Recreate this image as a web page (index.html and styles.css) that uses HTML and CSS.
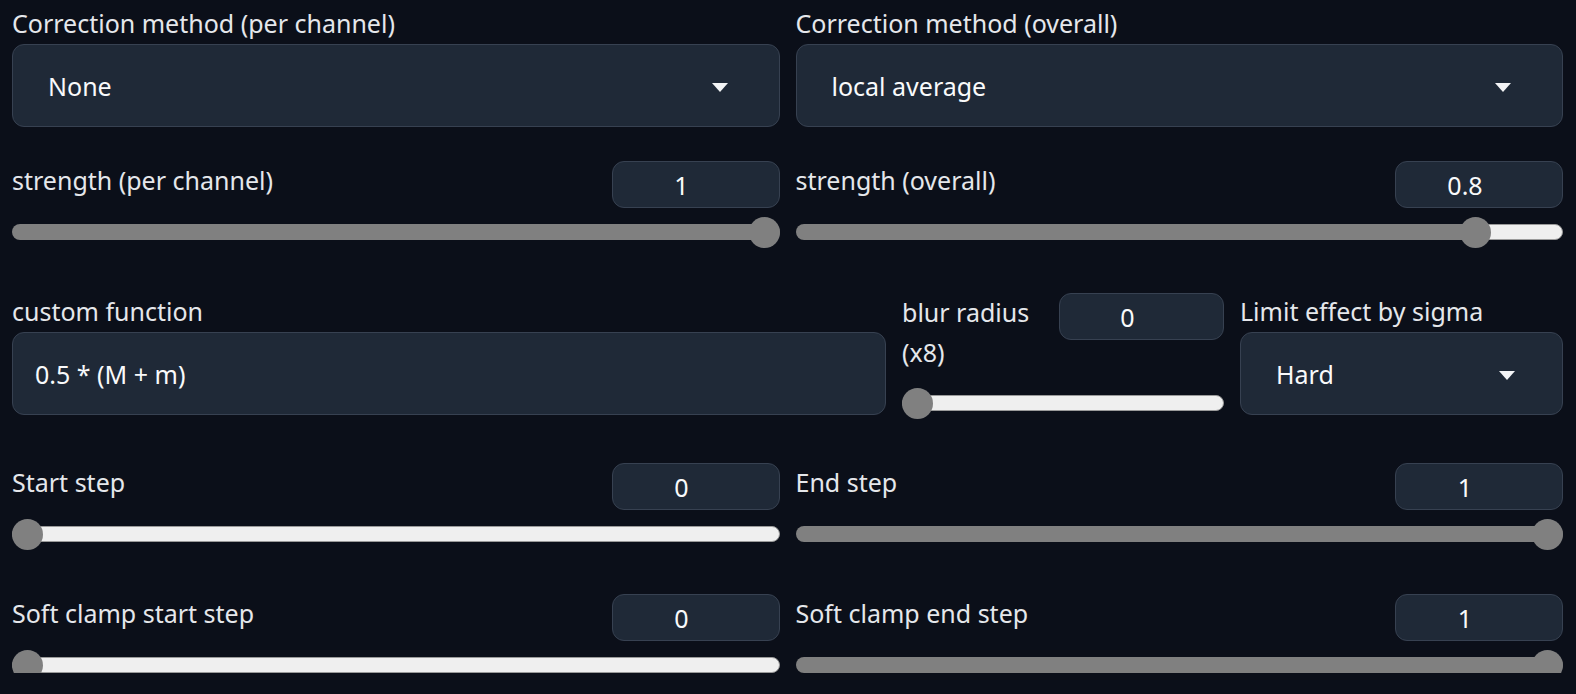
FILE: index.html
```html
<!DOCTYPE html>
<html>
<head>
<meta charset="utf-8">
<link rel="stylesheet" href="styles.css">
</head>
<body>
<div class="page">
  <div class="row two">
    <div class="field">
      <div class="field-label">Correction method (per channel)</div>
      <div class="box select"><span>None</span><svg class="caret" width="16" height="9" viewBox="0 0 16 9"><path d="M0 0H16L8 9Z"/></svg></div>
    </div>
    <div class="field">
      <div class="field-label">Correction method (overall)</div>
      <div class="box select"><span>local average</span><svg class="caret" width="16" height="9" viewBox="0 0 16 9"><path d="M0 0H16L8 9Z"/></svg></div>
    </div>
  </div>

  <div class="row two r2">
    <div class="slider">
      <div class="slider-head"><span class="slider-label">strength (per channel)</span><div class="num">1</div></div>
      <div class="track at-max"><div class="fill"></div><div class="rest"></div><div class="thumb"></div></div>
    </div>
    <div class="slider">
      <div class="slider-head"><span class="slider-label">strength (overall)</span><div class="num">0.8</div></div>
      <div class="track"><div class="fill" style="width:calc(15.5px + (100% - 31px) * 0.9016)"></div><div class="rest"></div><div class="thumb" style="left:calc((100% - 31px) * 0.9016)"></div></div>
    </div>
  </div>

  <div class="row three r3">
    <div class="field offset">
      <div class="field-label">custom function</div>
      <div class="box textbox"><span>0.5 * (M + m)</span></div>
    </div>
    <div class="slider blur">
      <div class="slider-head"><span class="slider-label">blur radius (x8)</span><div class="num">0</div></div>
      <div class="track at-min"><div class="fill"></div><div class="rest"></div><div class="thumb"></div></div>
    </div>
    <div class="field offset">
      <div class="field-label">Limit effect by sigma</div>
      <div class="box select narrow"><span>Hard</span><svg class="caret" width="16" height="9" viewBox="0 0 16 9"><path d="M0 0H16L8 9Z"/></svg></div>
    </div>
  </div>

  <div class="row two r4">
    <div class="slider">
      <div class="slider-head"><span class="slider-label">Start step</span><div class="num">0</div></div>
      <div class="track at-min"><div class="fill"></div><div class="rest"></div><div class="thumb"></div></div>
    </div>
    <div class="slider">
      <div class="slider-head"><span class="slider-label">End step</span><div class="num">1</div></div>
      <div class="track at-max"><div class="fill"></div><div class="rest"></div><div class="thumb"></div></div>
    </div>
  </div>

  <div class="row two r5">
    <div class="slider">
      <div class="slider-head"><span class="slider-label">Soft clamp start step</span><div class="num">0</div></div>
      <div class="track at-min"><div class="fill"></div><div class="rest"></div><div class="thumb"></div></div>
    </div>
    <div class="slider">
      <div class="slider-head"><span class="slider-label">Soft clamp end step</span><div class="num">1</div></div>
      <div class="track at-max"><div class="fill"></div><div class="rest"></div><div class="thumb"></div></div>
    </div>
  </div>
</div>
</body>
</html>
```

FILE: styles.css
```css
html, body {
  margin: 0;
  background: #0b0f19;
}
body {
  font-family: "Noto Sans", "Open Sans", sans-serif;
  font-size: 25px;
  color: #e5e7eb;
}
.page {
  padding: 8px 13px 0 12px;
}
.row {
  display: grid;
  gap: 16px;
  align-items: start;
}
.two {
  grid-template-columns: 1fr 1fr;
}
.three {
  grid-template-columns: 874px 322px 1fr;
}
.r2 { margin-top: 34px; }
.r3 { margin-top: 53px; }
.r4 { margin-top: 48px; }
.r5 { margin-top: 52px; }

.field-label {
  line-height: 30px;
  margin-bottom: 6px;
  white-space: nowrap;
}
.offset {
  padding-top: 3px;
}
.box {
  height: 83px;
  box-sizing: border-box;
  border: 1px solid #374151;
  background: #1f2937;
  border-radius: 12px;
  display: flex;
  align-items: center;
  color: #f9fafb;
  padding-left: 35px;
}
.select {
  justify-content: space-between;
  padding-right: 51px;
}
.select.narrow {
  padding-right: 47px;
}
.textbox {
  padding-left: 22px;
}
.caret {
  margin-top: 4px;
  flex-shrink: 0;
}
.caret path {
  fill: #f3f4f6;
}

.slider-head {
  display: flex;
  justify-content: space-between;
  align-items: flex-start;
  gap: 12px;
  min-height: 47px;
}
.slider-label {
  line-height: 40px;
  margin-top: -1px;
}
.num {
  width: 168px;
  height: 47px;
  flex-shrink: 0;
  box-sizing: border-box;
  border: 1px solid #374151;
  background: #1f2937;
  border-radius: 12px;
  display: flex;
  align-items: center;
  justify-content: center;
  padding-right: 28px;
  color: #f9fafb;
}
.blur .num {
  width: 165px;
}
.track {
  position: relative;
  display: flex;
  height: 16px;
  margin-top: 16px;
}
.blur .track {
  margin-top: 23px;
}
.fill {
  height: 16px;
  background: #808080;
  border-radius: 8px 0 0 8px;
  flex-shrink: 0;
}
.rest {
  flex: 1;
  height: 16px;
  box-sizing: border-box;
  background: #efefef;
  border: 1px solid #9a9a9a;
  border-radius: 8px;
  margin-left: -8px;
}
.thumb {
  position: absolute;
  top: 50%;
  width: 31px;
  height: 31px;
  margin-top: -15.5px;
  border-radius: 50%;
  background: #808080;
}
.at-min .fill {
  display: none;
}
.at-min .rest {
  margin-left: 0;
}
.at-min .thumb {
  left: 0;
}
.at-max .fill {
  width: 100%;
  border-radius: 8px;
}
.at-max .rest {
  display: none;
}
.at-max .thumb {
  right: 0;
}
```
